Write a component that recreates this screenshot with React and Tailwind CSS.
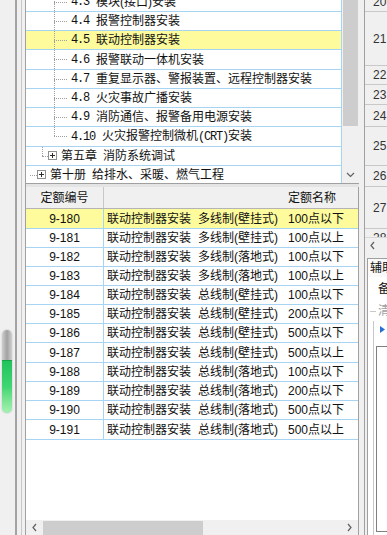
import React from 'react';

const MONO = "font-['Liberation_Mono',monospace] tracking-[-1.2px] whitespace-pre";

function Connector({ last }) {
  return (
    <div className="flex w-[13px] shrink-0 flex-col">
      <div className="flex-1 border-l border-dotted border-[#a0a0a0]" />
      <div className="h-0 border-t border-dotted border-[#a0a0a0]" />
      <div className={last ? 'flex-1' : 'flex-1 border-l border-dotted border-[#a0a0a0]'} />
    </div>
  );
}

function PlusBox() {
  return (
    <svg width="9" height="9" viewBox="0 0 9 9" shapeRendering="crispEdges">
      <rect x="0.5" y="0.5" width="8" height="8" fill="#ffffff" stroke="#919191" />
      <path d="M2 4.5H7M4.5 2V7" stroke="#2b2b2b" />
    </svg>
  );
}

const treeRows = [
  { num: '4.3', text: '模块(接口)安装', h: 'h-[19px] mt-[-7px]' },
  { num: '4.4', text: '报警控制器安装', h: 'h-[19px]' },
  { num: '4.5', text: '联动控制器安装', h: 'h-[19px]', selected: true },
  { num: '4.6', text: '报警联动一体机安装', h: 'h-[20px]' },
  { num: '4.7', text: '重复显示器、警报装置、远程控制器安装', h: 'h-[19px]' },
  { num: '4.8', text: '火灾事故广播安装', h: 'h-[19px]' },
  { num: '4.9', text: '消防通信、报警备用电源安装', h: 'h-[19px]' },
  {
    num: '4.10',
    text: (
      <>
        火灾报警控制微机<span className={MONO}>(CRT)</span>安装
      </>
    ),
    h: 'h-[20px]',
    last: true,
  },
];

function TreeChild({ num, text, h, selected, last }) {
  return (
    <div className={`flex shrink-0 border-b border-[#a6d4f2] ${h} ${selected ? 'bg-[#fdfb9c]' : ''}`}>
      <div className="w-[28px] shrink-0" />
      <Connector last={last} />
      <div className="ml-[4px] flex items-center whitespace-nowrap">
        <span className={MONO}>{num + ' '}</span>
        <span className="ml-px">{text}</span>
      </div>
    </div>
  );
}

const tableRows = [
  ['9-180', '多线制(壁挂式)', '100点以下', 'h-[20px]'],
  ['9-181', '多线制(壁挂式)', '100点以上', 'h-[19px]'],
  ['9-182', '多线制(落地式)', '100点以下', 'h-[19px]'],
  ['9-183', '多线制(落地式)', '100点以上', 'h-[19px]'],
  ['9-184', '总线制(壁挂式)', '100点以下', 'h-[19px]'],
  ['9-185', '总线制(壁挂式)', '200点以下', 'h-[19px]'],
  ['9-186', '总线制(壁挂式)', '500点以下', 'h-[19px]'],
  ['9-187', '总线制(壁挂式)', '500点以上', 'h-[20px]'],
  ['9-188', '总线制(落地式)', '100点以下', 'h-[19px]'],
  ['9-189', '总线制(落地式)', '200点以下', 'h-[19px]'],
  ['9-190', '总线制(落地式)', '500点以下', 'h-[19px]'],
  ['9-191', '总线制(落地式)', '500点以上', 'h-[20px]'],
];

const rightCells = [
  ['20', 'h-[20px] mt-[-8px]'],
  ['21', 'h-[54px]'],
  ['22', 'h-[19px]'],
  ['23', 'h-[20px]'],
  ['24', 'h-[22px]'],
  ['25', 'h-[39px]'],
  ['26', 'h-[21px]'],
  ['27', 'h-[42px]'],
  ['28', 'h-[19px]'],
];

function ChevronDown() {
  return (
    <svg width="9" height="6" viewBox="0 0 9 6">
      <path d="M1 1l3.5 3.5L8 1" fill="none" stroke="#606060" strokeWidth="1.2" />
    </svg>
  );
}
function ChevronLeft() {
  return (
    <svg width="5" height="9" viewBox="0 0 5 9">
      <path d="M4 1L1 4.5 4 8" fill="none" stroke="#606060" strokeWidth="1.2" />
    </svg>
  );
}
function ChevronRight() {
  return (
    <svg width="5" height="9" viewBox="0 0 5 9">
      <path d="M1 1l3 3.5L1 8" fill="none" stroke="#606060" strokeWidth="1.2" />
    </svg>
  );
}

export default function App() {
  return (
    <div className="flex h-[535px] w-[387px] overflow-hidden bg-white font-['Liberation_Sans','Noto_Sans_CJK_SC',sans-serif] text-[12px] leading-none text-[#111]">
      {/* left strip */}
      <div className="flex w-[26px] shrink-0">
        <div className="w-[15px] bg-[#f0f0f0] pl-[2px] pt-[330px]">
          <div className="flex h-[83px] w-[10px] flex-col overflow-hidden rounded-full bg-linear-to-r from-[#cfcfcf] via-[#a2a2a2] to-[#cfcfcf] shadow-[0_0_2px_rgba(0,0,0,0.2)]">
            <div className="h-[30px]" />
            <div className="flex-1 border-t border-[#16a34a] bg-linear-to-b from-[#22c35c] via-[#3fd673] to-[#a4f2b2]" />
          </div>
        </div>
        <div className="w-[2px] bg-[#a3a3a3]" />
        <div className="w-[4px] bg-[#f0f0f0]" />
        <div className="w-px bg-[#c8c8c8]" />
        <div className="w-[3px] bg-[#f0f0f0]" />
        <div className="w-px bg-[#a0a0a0]" />
      </div>

      {/* middle column */}
      <div className="flex w-[333px] shrink-0 flex-col">
        {/* tree */}
        <div className="flex h-[183px] shrink-0">
          <div className="flex w-[316px] shrink-0 flex-col overflow-hidden border-r border-[#a6d4f2] bg-white">
            {treeRows.map((r, i) => (
              <TreeChild key={i} {...r} />
            ))}
            <div className="flex h-[19px] shrink-0 border-b border-[#a6d4f2]">
              <div className="w-[16px] shrink-0" />
              <div className="flex w-[6px] shrink-0 flex-col">
                <div className="flex-1 border-l border-dotted border-[#a0a0a0]" />
                <div className="h-0 border-t border-dotted border-[#a0a0a0]" />
                <div className="flex-1" />
              </div>
              <div className="pt-[4px]">
                <PlusBox />
              </div>
              <div className="ml-[4px] flex items-center whitespace-nowrap">
                <span>第五章</span>
                <span className="ml-[6px]">消防系统调试</span>
              </div>
            </div>
            <div className="flex h-[19px] shrink-0 border-b border-[#a6d4f2]">
              <div className="w-[4px] shrink-0" />
              <div className="flex w-[7px] shrink-0 flex-col">
                <div className="flex-1" />
                <div className="h-0 border-t border-dotted border-[#a0a0a0]" />
                <div className="flex-1" />
              </div>
              <div className="pt-[4px]">
                <PlusBox />
              </div>
              <div className="ml-[4px] flex items-center whitespace-nowrap">
                <span>第十册</span>
                <span className="ml-[6px]">给排水、采暖、燃气工程</span>
              </div>
            </div>
          </div>
          <div className="flex w-[17px] shrink-0 flex-col bg-[#f0f0f0]">
            <div className="mx-px h-[126px] bg-[#cdcdcd]" />
            <div className="flex-1" />
            <div className="flex h-[17px] items-center justify-center">
              <ChevronDown />
            </div>
          </div>
        </div>

        {/* splitter */}
        <div className="h-[4px] shrink-0 border-t border-[#a0a0a0] bg-[#e4e4e4]" />

        {/* table */}
        <div className="flex min-h-0 flex-1 flex-col overflow-hidden border-r border-[#a0a0a0] bg-white">
          <div className="flex h-[22px] shrink-0 border-b border-[#b4b4b4] bg-[#f0f0f0]">
            <div className="flex w-[78px] shrink-0 items-center justify-center border-r border-[#c8c8c8]">定额编号</div>
            <div className="flex w-[416px] shrink-0 items-center justify-center">定额名称</div>
          </div>
          {tableRows.map((r, i) => (
            <div
              key={r[0]}
              className={`flex shrink-0 border-b border-[#a6d4f2] ${r[3]} ${i === 0 ? 'bg-[#fdfb9c]' : ''}`}
            >
              <div className="flex w-[78px] shrink-0 items-center justify-center border-r border-[#a6d4f2]">{r[0]}</div>
              <div className="flex items-center whitespace-nowrap pl-[3px]">
                <span className="w-[91px] shrink-0">联动控制器安装</span>
                <span className="w-[90px] shrink-0">{r[1]}</span>
                <span>{r[2]}</span>
              </div>
            </div>
          ))}
          <div className="flex-1" />
          <div className="flex h-[15px] shrink-0 bg-[#f0f0f0]">
            <div className="flex w-[17px] shrink-0 items-center justify-center">
              <ChevronLeft />
            </div>
            <div className="mt-px w-[160px] shrink-0 bg-[#cdcdcd]" />
            <div className="flex-1" />
            <div className="flex w-[17px] shrink-0 items-center justify-center">
              <ChevronRight />
            </div>
          </div>
        </div>
      </div>

      {/* right column */}
      <div className="flex w-[28px] shrink-0">
        <div className="w-[5px] bg-[#f0f0f0]" />
        <div className="w-px bg-[#a0a0a0]" />
        <div className="flex w-[22px] flex-col bg-[#f0f0f0]">
          <div className="flex h-[237px] shrink-0 flex-col overflow-hidden">
            {rightCells.map(([n, h]) => (
              <div key={n} className={`flex shrink-0 items-center border-b border-[#c8c8c8] pl-[8px] text-[#333] ${h}`}>
                {n}
              </div>
            ))}
          </div>
          <div className="flex h-[16px] shrink-0 items-center border-t border-[#d8d8d8] pl-[5px]">
            <ChevronLeft />
          </div>
          <div className="h-[5px] shrink-0" />
          <div className="ml-[2px] flex h-[19px] shrink-0 items-center overflow-hidden whitespace-nowrap border-l border-t border-[#a0a0a0] bg-[#fafafa] pl-[2px]">
            辅助
          </div>
          <div className="ml-[2px] flex min-h-0 flex-1 flex-col border-l border-[#a0a0a0] bg-white">
            <div className="flex h-[24px] shrink-0 items-center overflow-hidden whitespace-nowrap pl-[10px]">备</div>
            <div className="flex h-[20px] shrink-0 items-center overflow-hidden whitespace-nowrap pl-[2px]">
              <div className="h-px w-[6px] shrink-0 bg-[#c8c8c8]" />
              <span className="ml-[2px] text-[#a0a0a0]">清</span>
            </div>
            <div className="ml-[5px] flex min-h-0 flex-1 flex-col border-l border-[#c8c8c8]">
              <div className="pl-[6px] pt-[5px]">
                <svg width="5" height="7" viewBox="0 0 5 7">
                  <path d="M0 0L5 3.5 0 7Z" fill="#2a6fd6" />
                </svg>
              </div>
              <div className="mb-[3px] ml-[2px] mt-[13px] flex-1 border-b border-l border-t border-[#808080] bg-white" />
            </div>
          </div>
        </div>
      </div>
    </div>
  );
}
